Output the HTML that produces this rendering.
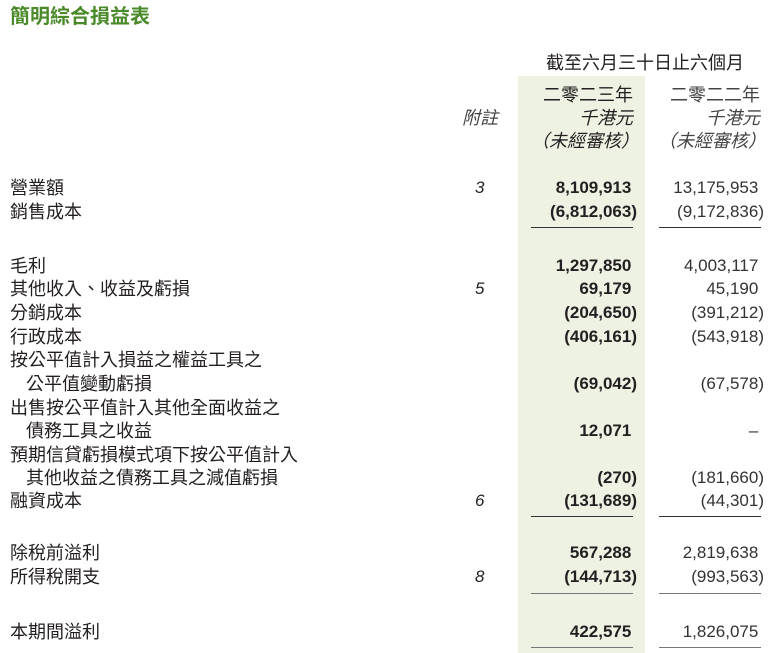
<!DOCTYPE html><html><head><meta charset="utf-8"><style>
body{margin:0;width:773px;height:653px;background:#fff;position:relative;overflow:hidden;font-family:"Liberation Sans","Noto Sans CJK TC",sans-serif;color:#231f20;font-size:17px}
.a{position:absolute;white-space:nowrap;line-height:20px}
.l{left:10px;font-size:18px}
.c{right:136px;text-align:right;font-weight:bold}
.p{right:9px;text-align:right;color:#333}
.n{left:475px;font-style:italic}
.h{visibility:hidden}
.ln{position:absolute;height:1px;background:#333}
.hd{font-size:18px}
</style></head><body>
<div class="a" style="left:10px;top:4px;color:#4a8a2a;font-weight:bold;font-size:20px;line-height:26px">簡明綜合損益表</div>
<div style="position:absolute;left:518px;top:76px;width:127px;height:577px;background:#eef2e2"></div>
<div class="a hd" style="left:546px;top:53px">截至六月三十日止六個月</div>
<div class="a hd" style="right:140px;top:85px">二零二三年</div>
<div class="a hd" style="right:13px;top:85px;color:#444">二零二二年</div>
<div class="a hd" style="left:462px;top:108px;font-style:italic;color:#444">附註</div>
<div class="a hd" style="right:140px;top:108px;font-style:italic">千港元</div>
<div class="a hd" style="right:13px;top:108px;font-style:italic;color:#444">千港元</div>
<div class="a hd" style="right:134px;top:131px;font-style:italic">（未經審核）</div>
<div class="a hd" style="right:7px;top:131px;font-style:italic;color:#444">（未經審核）</div>

<div class="a l" style="top:178px">營業額</div><div class="a n" style="top:178px">3</div>
<div class="a c" style="top:178px">8,109,913<span class="h">)</span></div><div class="a p" style="top:178px">13,175,953<span class="h">)</span></div>
<div class="a l" style="top:202px">銷售成本</div>
<div class="a c" style="top:202px">(6,812,063)</div><div class="a p" style="top:202px">(9,172,836)</div>
<div class="ln" style="left:531px;width:102px;top:227px"></div><div class="ln" style="left:659px;width:102px;top:227px"></div>

<div class="a l" style="top:256px">毛利</div>
<div class="a c" style="top:256px">1,297,850<span class="h">)</span></div><div class="a p" style="top:256px">4,003,117<span class="h">)</span></div>
<div class="a l" style="top:279px">其他收入、收益及虧損</div><div class="a n" style="top:279px">5</div>
<div class="a c" style="top:279px">69,179<span class="h">)</span></div><div class="a p" style="top:279px">45,190<span class="h">)</span></div>
<div class="a l" style="top:303px">分銷成本</div>
<div class="a c" style="top:303px">(204,650)</div><div class="a p" style="top:303px">(391,212)</div>
<div class="a l" style="top:327px">行政成本</div>
<div class="a c" style="top:327px">(406,161)</div><div class="a p" style="top:327px">(543,918)</div>
<div class="a l" style="top:350px">按公平值計入損益之權益工具之</div>
<div class="a l" style="top:374px;left:26px">公平值變動虧損</div>
<div class="a c" style="top:374px">(69,042)</div><div class="a p" style="top:374px">(67,578)</div>
<div class="a l" style="top:398px">出售按公平值計入其他全面收益之</div>
<div class="a l" style="top:421px;left:26px">債務工具之收益</div>
<div class="a c" style="top:421px">12,071<span class="h">)</span></div><div class="a p" style="top:421px">–<span class="h">)</span></div>
<div class="a l" style="top:445px">預期信貸虧損模式項下按公平值計入</div>
<div class="a l" style="top:468px;left:26px">其他收益之債務工具之減值虧損</div>
<div class="a c" style="top:468px">(270)</div><div class="a p" style="top:468px">(181,660)</div>
<div class="a l" style="top:491px">融資成本</div><div class="a n" style="top:491px">6</div>
<div class="a c" style="top:491px">(131,689)</div><div class="a p" style="top:491px">(44,301)</div>
<div class="ln" style="left:531px;width:102px;top:516px"></div><div class="ln" style="left:659px;width:102px;top:516px"></div>

<div class="a l" style="top:543px">除稅前溢利</div>
<div class="a c" style="top:543px">567,288<span class="h">)</span></div><div class="a p" style="top:543px">2,819,638<span class="h">)</span></div>
<div class="a l" style="top:567px">所得稅開支</div><div class="a n" style="top:567px">8</div>
<div class="a c" style="top:567px">(144,713)</div><div class="a p" style="top:567px">(993,563)</div>
<div class="ln" style="left:531px;width:102px;top:593px;background:#777"></div><div class="ln" style="left:659px;width:102px;top:593px;background:#777"></div>

<div class="a l" style="top:622px">本期間溢利</div>
<div class="a c" style="top:622px">422,575<span class="h">)</span></div><div class="a p" style="top:622px">1,826,075<span class="h">)</span></div>
<div class="ln" style="left:531px;width:102px;top:647px;background:#777"></div><div class="ln" style="left:659px;width:102px;top:647px;background:#777"></div>
</body></html>
